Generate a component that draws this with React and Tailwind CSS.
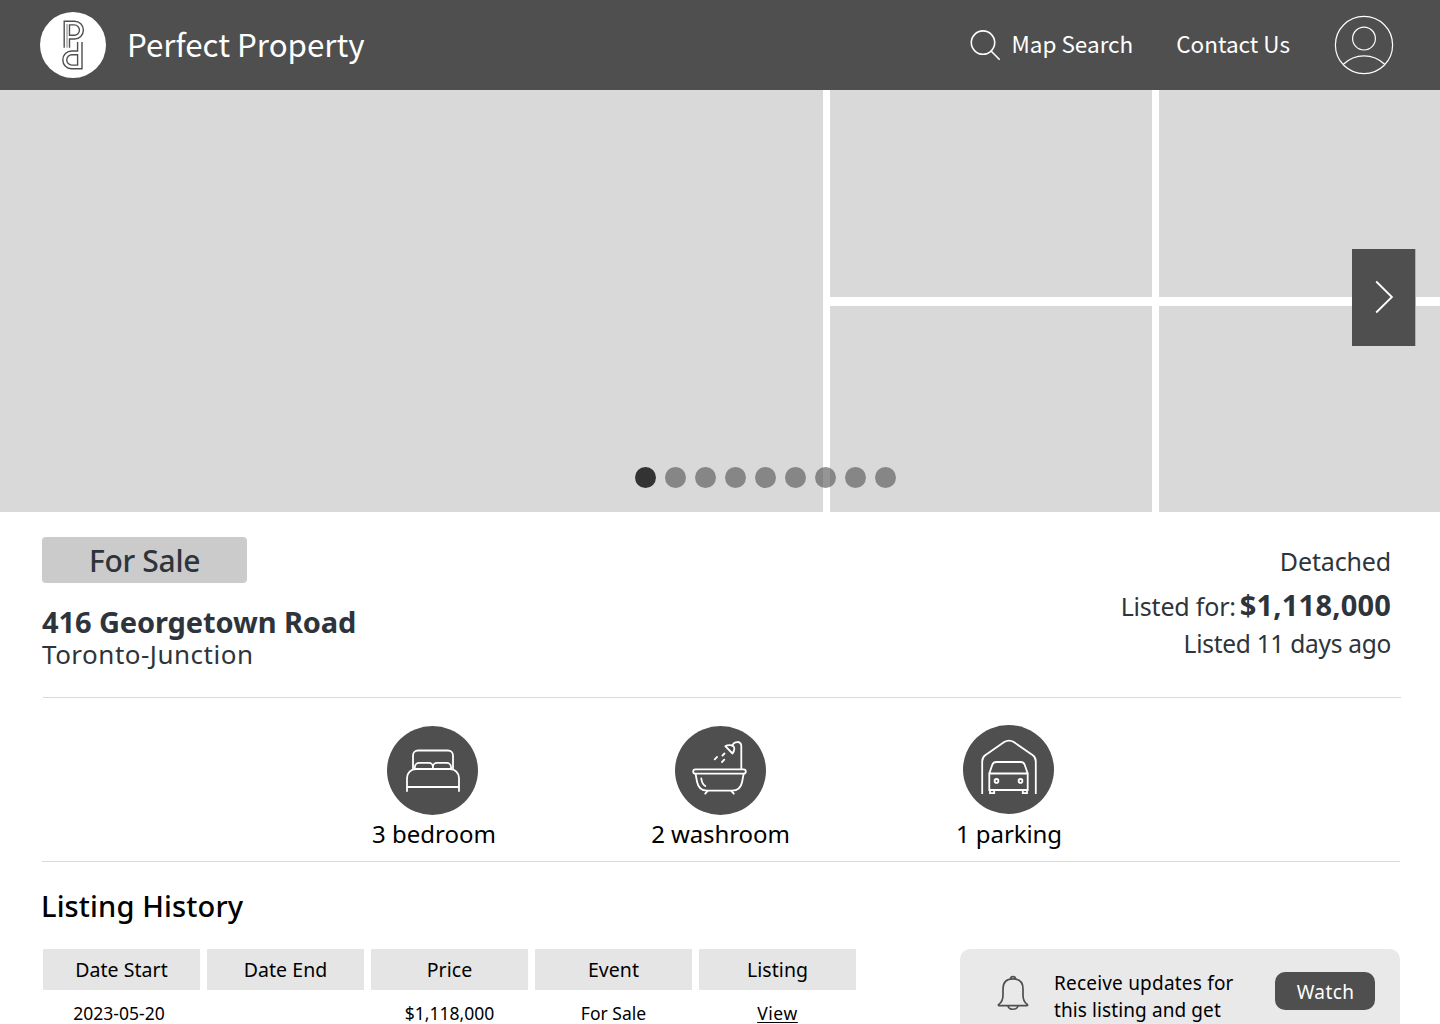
import React from "react";

const HEADER_FONT = "font-['Noto_Sans_CJK_SC','Noto_Sans',sans-serif]";

function Logo() {
  return (
    <svg className="size-[66px] shrink-0" viewBox="40 12 66 66" fill="none">
      <circle cx="73" cy="45" r="33" fill="#fff" />
      <g stroke="#4f4f4f" strokeWidth="1.4">
        <path d="M64.2 47.7V21.2H74.5a8.9 8.9 0 0 1 0 17.8H69.5V47.7" />
        <path d="M67 47.7V24" strokeWidth="0.7" />
        <path d="M69.5 24.9H74.3a5.1 5.1 0 0 1 0 10.3H69.5z" />
        <path d="M82 42V68.8H71.7a8.9 8.9 0 0 1 0-17.8H77.6V42" />
        <path d="M77.6 65.1H71.9a5.1 5.1 0 0 1 0-10.3H77.6z" />
      </g>
    </svg>
  );
}

function SearchIcon() {
  return (
    <svg className="size-8 shrink-0" viewBox="970 29 32 32" fill="none" stroke="#fff" strokeWidth="1.6">
      <circle cx="983" cy="42.6" r="11.7" />
      <path d="M991.3 51.2l8.4 8.6" />
    </svg>
  );
}

function UserIcon() {
  return (
    <svg className="size-[60px] shrink-0" viewBox="1334 15 60 60" fill="none" stroke="#fff" strokeWidth="1.2">
      <circle cx="1364" cy="45" r="28.6" />
      <circle cx="1364" cy="38.6" r="11.4" />
      <path d="M1343.4 64.3c11.5-11.3 29.7-11.3 41.2 0" />
    </svg>
  );
}

function BedIcon() {
  return (
    <svg className="h-[89px] w-[91px]" viewBox="387 726 91 89" fill="none" stroke="#fff" strokeWidth="1.8" strokeLinecap="round">
      <ellipse cx="432.5" cy="770.5" rx="45.5" ry="44.5" fill="#4f4f4f" stroke="none" />
      <path d="M413 768.3V755.5a5 5 0 0 1 5-5H448a5 5 0 0 1 5 5V768.3" />
      <path d="M414.8 768.5v-1.3a4.5 4.5 0 0 1 4.5-4.3h9.6a4 4 0 0 1 4 4 4 4 0 0 1 4-4h9.7a4.5 4.5 0 0 1 4.5 4.3v1.3M432.9 766.5v2" />
      <path d="M407 791V778a9 9 0 0 1 9-9H450a9 9 0 0 1 9 9V791M407 787H459" />
    </svg>
  );
}

function BathIcon() {
  return (
    <svg className="h-[89px] w-[91px]" viewBox="675 726 91 89" fill="none" stroke="#fff" strokeWidth="1.8" strokeLinecap="round" strokeLinejoin="round">
      <ellipse cx="720.5" cy="770.5" rx="45.5" ry="44.5" fill="#4f4f4f" stroke="none" />
      <rect x="693.2" y="769.3" width="52.6" height="4.4" rx="2.2" />
      <path d="M695.6 774.2l1.5 7.8c1.2 6.2 4.3 8.6 10 8.6h25c5.7 0 8.8-2.4 10-8.6l1.5-7.8" />
      <path d="M701.3 778.5c.5 4 1.7 6.3 4 7.5M707.5 791.2l-2.3 2.5M731.5 791.2l2.3 2.5" />
      <path d="M741.3 769V746c0-5.5-7.2-5-9.2-.3" />
      <path d="M725.3 746.2c2.2-1.3 6-1.6 8-.2 1.5 1.6 1.3 4.3-.8 7.5z" />
      <path d="M724.5 753.5l-2 2M717 757l-2.3 2.3M724.3 759.7l-2.3 2.3" />
    </svg>
  );
}

function GarageIcon() {
  return (
    <svg className="h-[89px] w-[91px]" viewBox="963 725 91 89" fill="none" stroke="#fff" strokeWidth="1.8">
      <ellipse cx="1008.5" cy="769.5" rx="45.5" ry="44.5" fill="#4f4f4f" stroke="none" />
      <path d="M982.2 794V761.5q0-4 3-6.2l19-13.200q4.800-3 9.600 0l19 13.200q3 2.200 3 6.200V794" />
      <path d="M989.300 773.500V790H1027.700V773.500zl3-8.800q1-2.700 4-2.700h24.400q3 0 4 2.700l3 8.800" />
      <path d="M990 790v3.200h4.200V790M1022.800 790v3.200h4.200V790" />
      <circle cx="996.500" cy="780.900" r="1.900" />
      <circle cx="1020.500" cy="780.900" r="1.900" />
    </svg>
  );
}

function BellIcon() {
  return (
    <svg className="mt-[26px] ml-[37px] h-9 w-8 shrink-0" viewBox="997 975 32 36" fill="none" stroke="#4f4f4f" strokeWidth="1.7" strokeLinejoin="round">
      <path d="M998.8 1004.400c3-2 4.200-5.500 4.200-9.400v-6c0-6.300 3.500-10.200 10-10.200s10 3.900 10 10.200v6c0 3.900 1.200 7.400 4.200 9.400q1 1.200-.4 1.200H999.200q-1.400 0-.4-1.200z" />
      <path d="M1010.500 978.900c.2-3 4.800-3 5 0M1008 1005.800c.8 4.600 9.200 4.600 10 0" />
    </svg>
  );
}

function Header() {
  return (
    <header className={`flex h-[90px] items-center bg-[#4f4f4f] pl-10 text-white ${HEADER_FONT}`}>
      <Logo />
      <span className="mb-[2px] ml-[21px] w-[240px] text-[31.3px] leading-10 whitespace-nowrap">Perfect Property</span>
      <nav className="ml-auto flex items-center pr-[46px] text-[22.5px] leading-8 whitespace-nowrap">
        <SearchIcon />
        <span className="mb-[5px] ml-[10px]">Map Search</span>
        <span className="mb-[5px] ml-[43px]">Contact Us</span>
        <span className="ml-11 flex">
          <UserIcon />
        </span>
      </nav>
    </header>
  );
}

function Gallery() {
  return (
    <section className="relative grid h-[422px] grid-cols-[823px_322px_281px] grid-rows-[207px_206px] gap-x-[7px] gap-y-[9px]">
      <div className="row-span-2 bg-[#d9d9d9]" />
      <div className="bg-[#d9d9d9]" />
      <div className="bg-[#d9d9d9]" />
      <div className="bg-[#d9d9d9]" />
      <div className="bg-[#d9d9d9]" />
      <button className="absolute top-[159px] right-[25px] flex h-[97px] w-[63px] items-center justify-center bg-[#4f4f4f] shadow-[1px_0_0_#b0b0b0]">
        <svg className="mb-px h-9 w-6" viewBox="1372 279 24 36" fill="none" stroke="#fff" strokeWidth="1.8">
          <path d="M1376.2 281.5l15.7 15.5-15.7 15.5" />
        </svg>
      </button>
      <div className="absolute bottom-6 left-[635px] flex gap-[9px]">
        <span className="size-[21px] rounded-full bg-[#333]" />
        {Array.from({ length: 8 }, (_, i) => (
          <span key={i} className="size-[21px] rounded-full bg-[#4f4f4f]/60" />
        ))}
      </div>
    </section>
  );
}

function Summary() {
  return (
    <section className="mr-[39px] ml-[43px] h-[186px] border-b border-[#d9d9d9] text-[#2e343b]">
      <div className="-ml-px flex justify-between pt-[25px] whitespace-nowrap">
        <div>
          <div className="flex h-[46px] w-[205px] items-center justify-center rounded bg-[#cbcbcb] text-[30px] font-medium tracking-[-0.3px]">For Sale</div>
          <h1 className="mt-[23px] text-[29px] leading-8 font-bold tracking-[-0.1px]">416 Georgetown Road</h1>
          <p className="text-[26px] leading-8 tracking-[0.5px]">Toronto-Junction</p>
        </div>
        <div className="mr-[10px] flex flex-col items-end pt-[6px]">
          <p className="text-[25px] leading-9 tracking-[-0.15px]">Detached</p>
          <p className="mt-2 flex items-baseline gap-1 leading-9">
            <span className="text-[25px] tracking-[-0.2px]">Listed for:</span>
            <b className="text-[29px] tracking-[0.2px]">$1,118,000</b>
          </p>
          <p className="mt-[2px] text-[24.5px] leading-9 tracking-[-0.28px]">Listed 11 days ago</p>
        </div>
      </div>
    </section>
  );
}

function Features() {
  return (
    <section className="mr-10 ml-[42px] flex h-[164px] justify-center border-b border-[#d9d9d9] pr-[2px] text-[24px] leading-9">
      <div className="flex w-[288px] flex-col items-center pt-7">
        <BedIcon />
        <span className="mt-px ml-1">3 bedroom</span>
      </div>
      <div className="flex w-[288px] flex-col items-center pt-7">
        <BathIcon />
        <span className="mt-px ml-px tracking-[-0.1px]">2 washroom</span>
      </div>
      <div className="flex w-[288px] flex-col items-center pt-[27px]">
        <GarageIcon />
        <span className="mt-[2px] ml-[2px] tracking-[-0.1px]">1 parking</span>
      </div>
    </section>
  );
}

function HistoryTable() {
  const head = "flex h-[41px] items-center justify-center bg-[#e5e5e5] text-[19.5px] tracking-[0.05px]";
  const cell = "pt-[9px] text-center text-[17.5px] leading-7";
  return (
    <div className="ml-[43px] grid grid-cols-[repeat(5,157px)] content-start gap-x-[7px]">
      {["Date Start", "Date End", "Price", "Event", "Listing"].map((label) => (
        <div key={label} className={head}>{label}</div>
      ))}
      <div className={`${cell} pr-[5px]`}>2023-05-20</div>
      <div className={cell} />
      <div className={cell}>$1,118,000</div>
      <div className={cell}>For Sale</div>
      <div className={cell}>
        <a className="tracking-[0.6px] underline decoration-1 underline-offset-2">View</a>
      </div>
    </div>
  );
}

function WatchCard() {
  return (
    <aside className="mr-10 ml-auto flex h-[120px] w-[440px] items-start rounded-[10px] bg-[#e9e9e9]">
      <BellIcon />
      <p className="mt-[21px] ml-[25px] w-[200px] text-[19px] leading-[27px]">
        <span className="tracking-[0.2px]">Receive updates for</span>
        <br />
        <span className="tracking-[0.1px]">this listing and get</span>
      </p>
      <button className="mt-[23px] mr-[25px] ml-auto flex h-[38px] w-[100px] items-center justify-center rounded-[10px] bg-[#4f4f4f] pt-[2px] pl-px text-[19px] tracking-[0.4px] text-white">
        Watch
      </button>
    </aside>
  );
}

export default function App() {
  return (
    <div className="h-[1024px] w-[1440px] overflow-hidden bg-white font-['Noto_Sans',sans-serif] text-black">
      <Header />
      <Gallery />
      <Summary />
      <Features />
      <h2 className="mt-[26px] mb-[25px] ml-[41px] text-[29px] leading-9 font-medium tracking-[0.15px]">Listing History</h2>
      <div className="flex">
        <HistoryTable />
        <WatchCard />
      </div>
    </div>
  );
}
